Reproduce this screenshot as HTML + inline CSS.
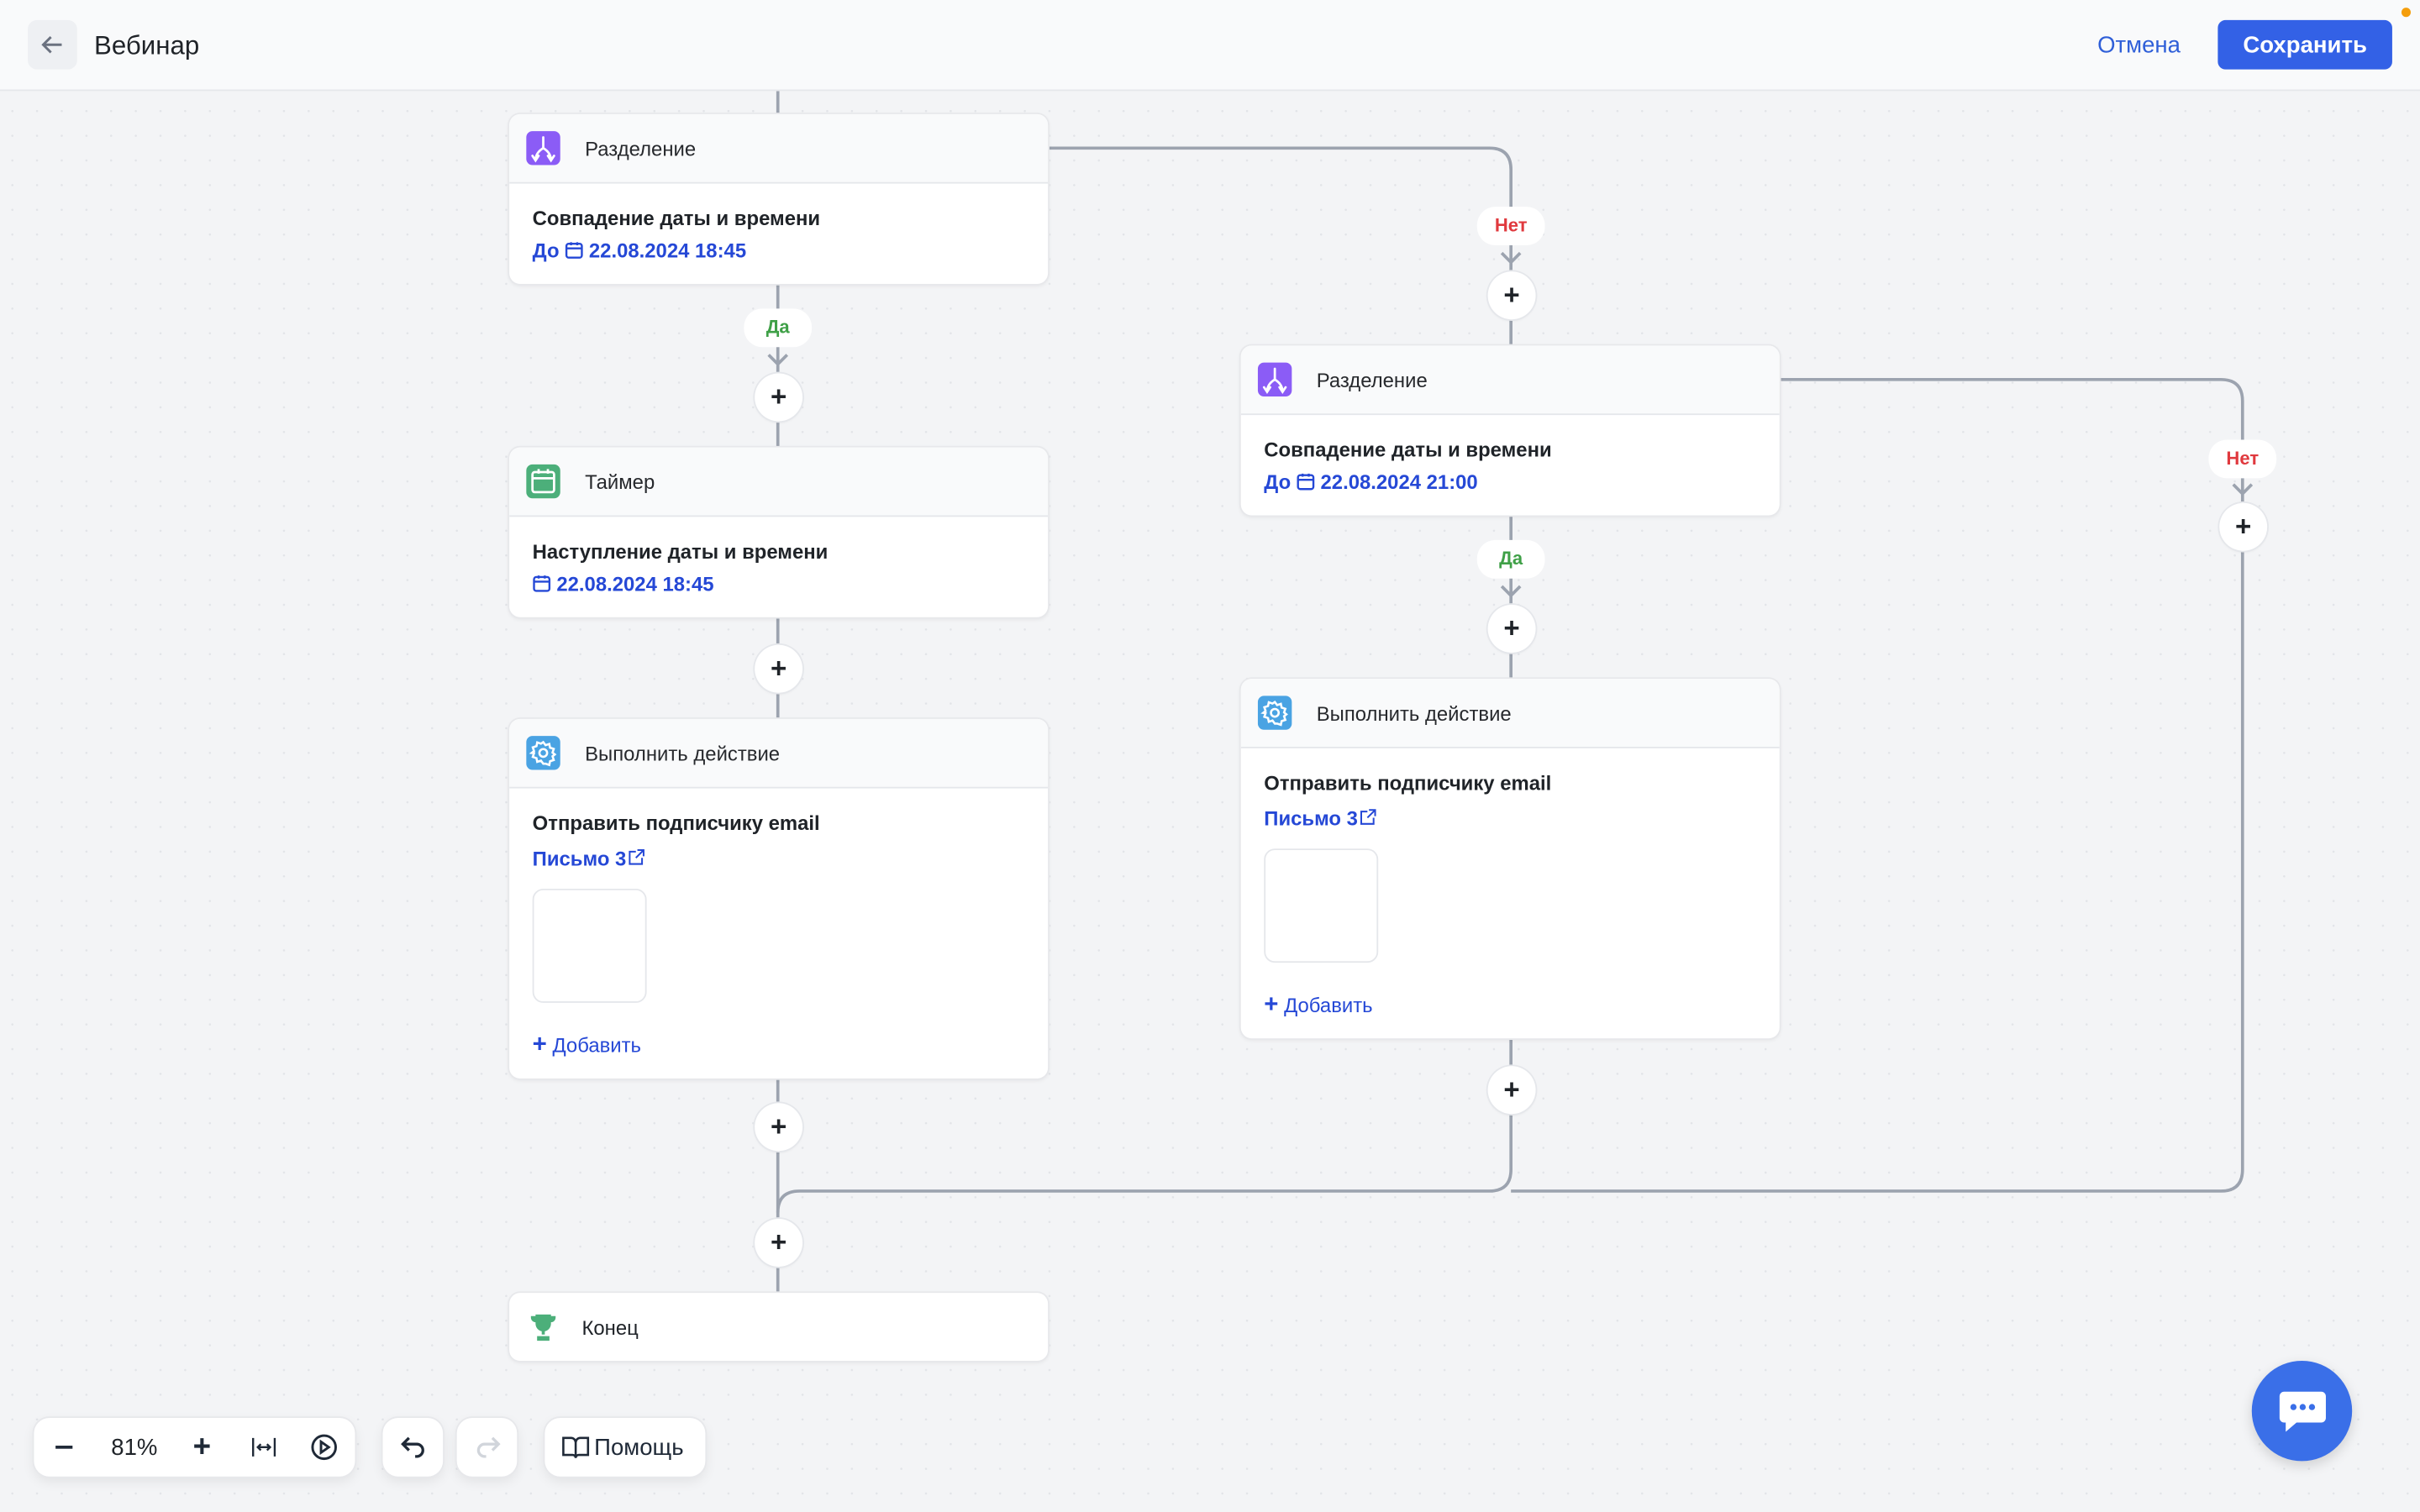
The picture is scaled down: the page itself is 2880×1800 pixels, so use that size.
<!DOCTYPE html>
<html><head><meta charset="utf-8"><style>
*{box-sizing:border-box;margin:0;padding:0}
html,body{width:2880px;height:1800px;overflow:hidden;background:#f3f4f6}
#s{position:absolute;left:0;top:0;width:1568px;height:980px;transform:scale(1.836735);transform-origin:0 0;font-family:"Liberation Sans",sans-serif;color:#1f2328;background:#f3f4f6;background-image:radial-gradient(#e2e4e8 0.6px,transparent 0.8px);background-size:16px 16px}
.hdr{position:absolute;left:0;top:0;width:1568px;height:59px;background:#f9fafb;border-bottom:1px solid #e5e7eb}
.a{position:absolute}
.card{position:absolute;width:349px;background:#fff;border-radius:7px;box-shadow:0 0 0 1px #e7e8eb,0 1px 3px rgba(0,0,0,.08);overflow:hidden}
.ch{height:45px;background:#f9fafb;border-bottom:1px solid #e5e7eb;position:relative}
.ch .ic{position:absolute;left:11px;top:11px;width:22px;height:22px;border-radius:4px}
.ch span{position:absolute;left:49px;top:15px;font-size:13px;color:#27292d}
.cb{padding:0 15px;position:relative}
.bt{font-weight:bold;font-size:13px;color:#1f2328;position:absolute;left:15px}
.bl{font-weight:bold;font-size:13px;color:#2548d6;position:absolute;left:15px}
.plus{position:absolute;width:31px;height:31px;border-radius:50%;background:#fff;box-shadow:0 0 0 1px #e5e7eb,0 1px 2px rgba(0,0,0,.06);text-align:center;line-height:30px;font-size:18px;font-weight:bold;color:#1f2328}
.pill{position:absolute;width:44px;height:25px;border-radius:12px;background:#fff;text-align:center;line-height:25px;font-size:12px;font-weight:bold}
.tb{position:absolute;top:919px;height:38px;background:#fff;border-radius:10px;box-shadow:0 0 0 1px #e7e8eb,0 3px 8px rgba(0,0,0,.08)}
</style></head><body><div id="s">
<svg class="a" style="left:0;top:0" width="1568" height="980" fill="none" stroke="#9ca3af" stroke-width="2">
<path d="M504 59V838"/>
<path d="M679 96H965q14 0 14 14V758q0 14-14 14H518q-14 0-14 14"/>
<path d="M1153 246H1439q14 0 14 14V758q0 14-14 14H979"/>
<path d="M498 230l6 6 6-6M973 164l6 6 6-6M973 380l6 6 6-6M1447 314l6 6 6-6"/>
</svg>
<div class="hdr">
<div class="a" style="left:18px;top:13px;width:32px;height:32px;border-radius:6px;background:#eef0f3"><svg width="32" height="32" fill="none" stroke="#6b7280" stroke-width="1.6"><path d="M22 16H10M15 11l-5 5 5 5"/></svg></div>
<div class="a" style="left:61px;top:20px;font-size:17px;color:#1f2328">Вебинар</div>
<div class="a" style="left:1359px;top:21px;font-size:15px;color:#2f5fd8">Отмена</div>
<div class="a" style="left:1437px;top:13px;width:113px;height:32px;border-radius:5px;background:#3361e6;color:#fff;font-weight:bold;font-size:15px;text-align:center;line-height:33px">Сохранить</div>
<div class="a" style="left:1556px;top:5px;width:6px;height:6px;border-radius:50%;background:#f59e0b"></div>
</div>

<div class="card" style="left:330px;top:74px;height:110px"><div class="ch"><div class="ic" style="background:#8b5cf6"><svg width="22" height="22" fill="none" stroke="#fff" stroke-width="1.5" stroke-linecap="round"><path d="M11 4v7M11 11q-5 3-5 8M11 11q5 3 5 8M4 16l2 3 2-3M14 16l2 3 2-3"/></svg></div><span>Разделение</span></div>
<div class="bt" style="top:60px">Совпадение даты и времени</div><div class="bl" style="top:81px">До <svg width="12" height="12" fill="none" stroke="#2548d6" stroke-width="1.3" style="vertical-align:-1px"><rect x="1" y="2" width="10" height="9" rx="1.5"/><path d="M1 5h10M4 1v2M8 1v2"/></svg> 22.08.2024 18:45</div></div>
<div class="pill" style="left:482px;top:200px;color:#3fa047">Да</div>
<div class="plus" style="left:489px;top:242px">+</div>

<div class="card" style="left:330px;top:290px;height:110px"><div class="ch"><div class="ic" style="background:#4caf7a"><svg width="22" height="22" fill="none" stroke="#fff" stroke-width="1.5"><rect x="4" y="5" width="14" height="13" rx="1.5"/><path d="M4 9h14M8 3v3M14 3v3"/></svg></div><span>Таймер</span></div>
<div class="bt" style="top:60px">Наступление даты и времени</div><div class="bl" style="top:81px"><svg width="12" height="12" fill="none" stroke="#2548d6" stroke-width="1.3" style="vertical-align:-1px"><rect x="1" y="2" width="10" height="9" rx="1.5"/><path d="M1 5h10M4 1v2M8 1v2"/></svg> 22.08.2024 18:45</div></div>
<div class="plus" style="left:489px;top:418px">+</div>

<div class="card" style="left:330px;top:466px;height:233px"><div class="ch"><div class="ic" style="background:#4aa3e3"><svg width="22" height="22" fill="none" stroke="#fff" stroke-width="1.4"><circle cx="11" cy="11" r="2.5"/><path d="M11 4l1.5 2 2.4-.8.5 2.4 2.4.8-.8 2.4 1.5 1.2-1.5 1.2.8 2.4-2.4.8-.5 2.4-2.4-.8L11 18l-1.5-2-2.4.8-.5-2.4-2.4-.8.8-2.4L3.5 11 5 9.8 4.2 7.4l2.4-.8.5-2.4 2.4.8z"/></svg></div><span>Выполнить действие</span></div>
<div class="bt" style="top:60px">Отправить подписчику email</div><div class="bl" style="top:83px">Письмо 3<svg width="12" height="12" fill="none" stroke="#2548d6" stroke-width="1.1"><path d="M6 3H2v8h8V7M7 2h4v4M11 2L6 7"/></svg></div>
<div class="a" style="left:15px;top:110px;width:74px;height:74px;border:1px solid #e5e7eb;border-radius:7px"></div>
<div class="a" style="left:15px;top:203px;font-size:13px;color:#2548d6"><b style="font-size:16px">+</b> Добавить</div></div>
<div class="plus" style="left:489px;top:715px">+</div>
<div class="plus" style="left:489px;top:790px">+</div>
<div class="card" style="left:330px;top:838px;height:44px"><svg class="a" style="left:11px;top:11px" width="22" height="22" fill="#4caf7a"><path d="M6 3h10v6a5 5 0 0 1-10 0zM3 4h3v4a3 3 0 0 1-3-3zM19 4h-3v4a3 3 0 0 0 3-3zM10 13h2v3h-2zM7 17h8v3H7z"/></svg><span class="a" style="left:47px;top:15px;font-size:13px">Конец</span></div>

<div class="pill" style="left:957px;top:134px;color:#e0393e">Нет</div>
<div class="plus" style="left:964px;top:176px">+</div>
<div class="card" style="left:804px;top:224px;height:110px"><div class="ch"><div class="ic" style="background:#8b5cf6"><svg width="22" height="22" fill="none" stroke="#fff" stroke-width="1.5" stroke-linecap="round"><path d="M11 4v7M11 11q-5 3-5 8M11 11q5 3 5 8M4 16l2 3 2-3M14 16l2 3 2-3"/></svg></div><span>Разделение</span></div>
<div class="bt" style="top:60px">Совпадение даты и времени</div><div class="bl" style="top:81px">До <svg width="12" height="12" fill="none" stroke="#2548d6" stroke-width="1.3" style="vertical-align:-1px"><rect x="1" y="2" width="10" height="9" rx="1.5"/><path d="M1 5h10M4 1v2M8 1v2"/></svg> 22.08.2024 21:00</div></div>
<div class="pill" style="left:957px;top:350px;color:#3fa047">Да</div>
<div class="plus" style="left:964px;top:392px">+</div>
<div class="card" style="left:804px;top:440px;height:233px"><div class="ch"><div class="ic" style="background:#4aa3e3"><svg width="22" height="22" fill="none" stroke="#fff" stroke-width="1.4"><circle cx="11" cy="11" r="2.5"/><path d="M11 4l1.5 2 2.4-.8.5 2.4 2.4.8-.8 2.4 1.5 1.2-1.5 1.2.8 2.4-2.4.8-.5 2.4-2.4-.8L11 18l-1.5-2-2.4.8-.5-2.4-2.4-.8.8-2.4L3.5 11 5 9.8 4.2 7.4l2.4-.8.5-2.4 2.4.8z"/></svg></div><span>Выполнить действие</span></div>
<div class="bt" style="top:60px">Отправить подписчику email</div><div class="bl" style="top:83px">Письмо 3<svg width="12" height="12" fill="none" stroke="#2548d6" stroke-width="1.1"><path d="M6 3H2v8h8V7M7 2h4v4M11 2L6 7"/></svg></div>
<div class="a" style="left:15px;top:110px;width:74px;height:74px;border:1px solid #e5e7eb;border-radius:7px"></div>
<div class="a" style="left:15px;top:203px;font-size:13px;color:#2548d6"><b style="font-size:16px">+</b> Добавить</div></div>
<div class="plus" style="left:964px;top:691px">+</div>
<div class="pill" style="left:1431px;top:285px;color:#e0393e">Нет</div>
<div class="plus" style="left:1438px;top:326px">+</div>

<div class="tb" style="left:22px;width:208px">
<div class="a" style="left:14px;top:18px;width:11px;height:2px;background:#1f2937"></div>
<div class="a" style="left:50px;top:11px;font-size:15px">81%</div>
<div class="a" style="left:103px;top:8px;font-size:20px;font-weight:bold;color:#1f2937">+</div>
<svg class="a" style="left:140px;top:11px" width="18" height="16" fill="none" stroke="#1f2937" stroke-width="1.8"><path d="M2 2v12M16 2v12M5 8h8M7 6l-2 2 2 2M11 6l2 2-2 2" stroke-width="1.3"/></svg>
<svg class="a" style="left:179px;top:10px" width="18" height="18" fill="none" stroke="#1f2937" stroke-width="1.6"><circle cx="9" cy="9" r="7.5"/><path d="M7 5.5v7l5-3.5z"/></svg></div>
<div class="tb" style="left:248px;width:39px"><svg class="a" style="left:10px;top:10px" width="20" height="20" fill="none" stroke="#1f2937" stroke-width="1.8"><path d="M4 7h8a4 4 0 0 1 0 8h-1M7 3L3 7l4 4"/></svg></div>
<div class="tb" style="left:296px;width:39px"><svg class="a" style="left:10px;top:10px" width="20" height="20" fill="none" stroke="#d1d5db" stroke-width="1.8"><path d="M16 7H8a4 4 0 0 0 0 8h1M13 3l4 4-4 4"/></svg></div>
<div class="tb" style="left:353px;width:104px"><svg class="a" style="left:11px;top:11px" width="18" height="16" fill="none" stroke="#1f2937" stroke-width="1.4"><path d="M1 2h5a3 3 0 0 1 3 3v10a2 2 0 0 0-2-2H1zM17 2h-5a3 3 0 0 0-3 3v10a2 2 0 0 1 2-2h6z"/></svg><span class="a" style="left:32px;top:11px;font-size:15px;color:#1f2937">Помощь</span></div>
<div class="a" style="left:1459px;top:882px;width:65px;height:65px;border-radius:50%;background:#3a6fe8;box-shadow:0 3px 8px rgba(0,0,0,.15)"><svg class="a" style="left:17px;top:18px" width="32" height="30"><path d="M4 2h24a3 3 0 0 1 3 3v14a3 3 0 0 1-3 3H12l-7 6v-6H4a3 3 0 0 1-3-3V5a3 3 0 0 1 3-3z" fill="#fff"/><circle cx="10" cy="12" r="2" fill="#3a6fe8"/><circle cx="16" cy="12" r="2" fill="#3a6fe8"/><circle cx="22" cy="12" r="2" fill="#3a6fe8"/></svg></div>
</div></body></html>
